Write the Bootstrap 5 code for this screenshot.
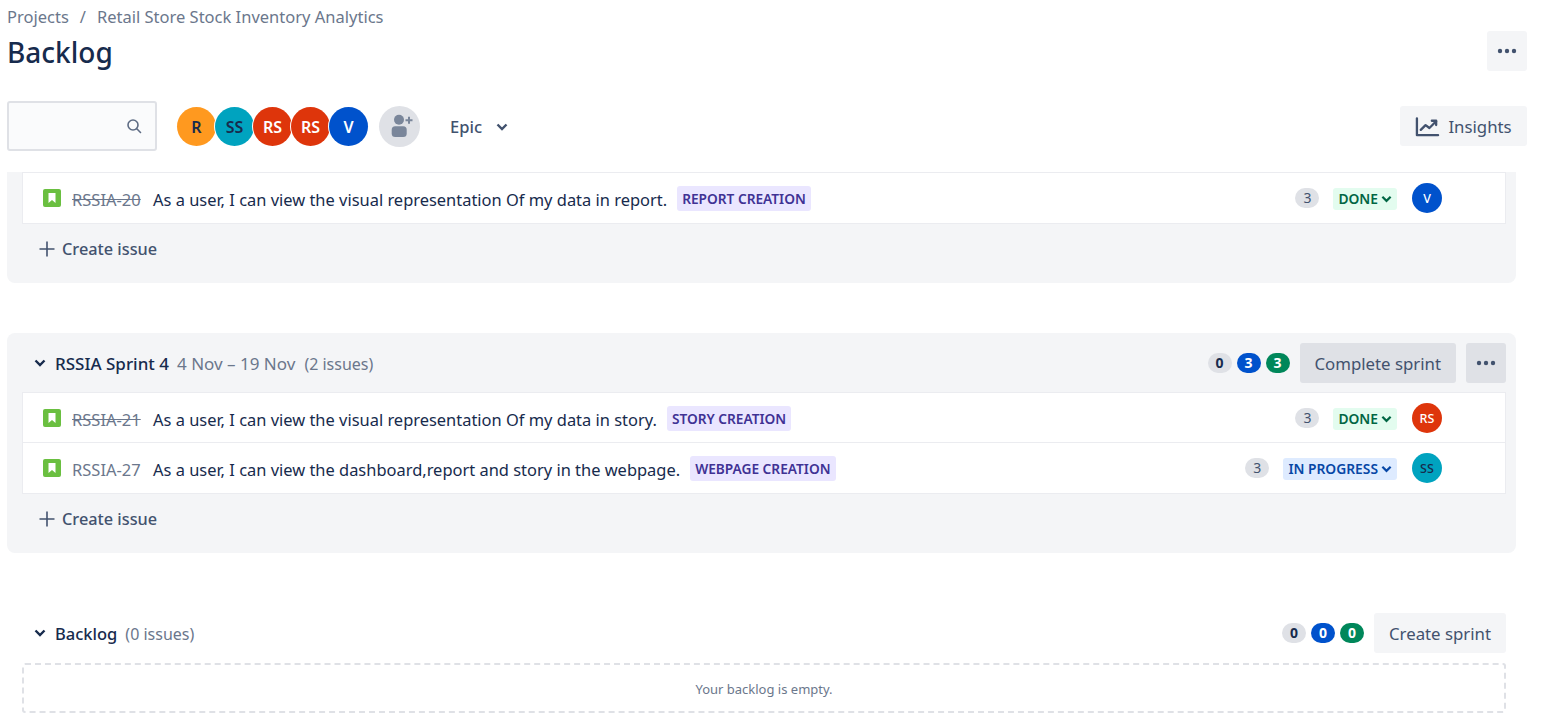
<!DOCTYPE html>
<html lang="en">
<head>
<meta charset="utf-8">
<title>Backlog</title>
<link href="https://cdn.jsdelivr.net/npm/bootstrap@5.3.0/dist/css/bootstrap.min.css" rel="stylesheet">
<style>
html,body{height:726px;overflow:hidden;background:#fff}
body{font-family:"Noto Sans","Open Sans",sans-serif;font-size:16.5px;color:#172b4d;line-height:20px}
.page-wrap{padding:0 18px 0 7px;width:1545px}
.crumbs{height:33px;color:#6b778c;gap:11px}
.page-title{height:37px;margin:0;font-size:28px;font-weight:500;line-height:39px;color:#172b4d}
.more-top{width:40px;height:40px;margin-top:-2px}
.head-row{height:68px}
.toolbar{height:70px;padding-bottom:20px}
.searchbox{width:150px;height:50px;background:#fafbfc;border:2px solid #dfe1e6;border-radius:3px;padding-right:13px}
.avatars{margin-left:20px}
.ava{width:39px;height:39px;border-radius:50%;display:flex;align-items:center;justify-content:center;font-weight:600;font-size:16px;border:0;flex:none;padding-top:1px}
.avatars .ava{margin-right:-1px;box-shadow:0 0 0 1px #fff}
.c-o{background:#ff991f;color:#172b4d}.c-t{background:#00a3bf;color:#172b4d}.c-r{background:#de350b;color:#fff}.c-b{background:#0052cc;color:#fff}
.add-ava{background:#dfe1e6;margin-left:12px;height:41px;width:41px;padding:0}
.epic{margin-left:30px;font-weight:500;color:#42526e;gap:14px;padding-top:1px}
.jbtn{background:#f4f5f7;color:#42526e;border:0;border-radius:3px;font-size:16.8px;height:40px;display:inline-flex;align-items:center;justify-content:center;padding:1px 15px 0;line-height:20px}
.jbtn.dark{background:#dfe1e6}
.jbtn.square{width:40px;padding:0}
.btn-gap{margin-left:10px}
.insights{width:127px;gap:8px;padding:1px 0 0}
.scroller{height:555px;overflow:hidden}
.sprint{background:#f4f5f7;border-radius:8px;width:1509px;padding:0 10px 0 15px}
.sprint-first{height:111px;border-radius:0 0 8px 8px;margin-top:1px}
.sprint-second{height:220px;margin-top:50px}
.sprint-head{height:59px;padding-top:1px}
.chev{margin-left:12px;margin-right:9px;flex:none}
.sp-name{font-weight:500;color:#172b4d;margin-right:8px;padding-top:2px}
.sp-long{font-size:17px}
.sp-meta{color:#6b778c;margin-right:9px;padding-top:2px;font-size:16px}
.sp-date{font-size:17px}
.issues{background:#fff;border:1px solid #ebecf0}
.issue{height:50px;padding:1px 63px 0 20px;border-bottom:1px solid #ebecf0}
.issue:last-child{border-bottom:0;padding-top:0}
.key{color:#6b778c;margin:0 10px 0 11px;min-width:71px;padding-top:3px}
.key.done{text-decoration:line-through}
.summary{color:#172b4d;padding-top:3px;font-size:16.45px}
.epic-tag{background:#eae6ff;color:#403294;font-size:13.7px;font-weight:600;border-radius:3px;padding:0 5px;height:25px;line-height:25px;margin-left:10px}
.points{background:#dfe1e6;color:#42526e;border-radius:10px;min-width:24px;height:20px;font-size:14px;text-align:center;line-height:20px;margin-right:14px}
.status{height:22px;font-size:13.8px;font-weight:600;border-radius:3px;padding:0 5px;gap:3px;line-height:22px;margin-top:2px}
.st-done{background:#e3fcef;color:#006644}
.st-prog{background:#deebff;color:#0747a6}
.issue .ava{width:30px;height:30px;font-size:12.5px;font-weight:500;margin-left:15px}
.create{height:50px;color:#42526e;font-weight:500;padding-left:17px;gap:7px;font-size:16.3px}
.cnt{min-width:24px;height:20px;border-radius:10px;text-align:center;font-size:14px;font-weight:700;line-height:20px;margin-right:5px;padding:0 5px}
.cnt.g{background:#dfe1e6;color:#172b4d}.cnt.b{background:#0052cc;color:#fff}.cnt.v{background:#00875a;color:#fff;margin-right:0}
.backlog{width:1484px;margin-left:15px;margin-top:60px}
.backlog-head{height:50px;padding-bottom:10px}
.empty{height:50px;border:2px dashed #dfe1e6;border-radius:3px;color:#6b778c;font-size:13px;padding-top:2px}
</style>
</head>
<body>
<div class="page-wrap">
  <nav class="crumbs d-flex align-items-center"><span>Projects</span><span>/</span><span>Retail Store Stock Inventory Analytics</span></nav>
  <div class="head-row d-flex justify-content-between align-items-start">
    <h1 class="page-title">Backlog</h1>
    <button class="jbtn square more-top" aria-label="More"><svg width="24" height="24" viewBox="0 0 24 24" fill="#42526e"><circle cx="5" cy="12" r="2.2"/><circle cx="12" cy="12" r="2.2"/><circle cx="19" cy="12" r="2.2"/></svg></button>
  </div>
  <div class="toolbar d-flex align-items-center">
    <div class="searchbox d-flex align-items-center justify-content-end"><svg width="16" height="16" viewBox="0 0 16 16" fill="none" stroke="#5e6c84" stroke-width="1.6"><circle cx="7" cy="7" r="5"/><path d="M10.8 10.8 14.5 14.5" stroke-linecap="round"/></svg></div>
    <div class="avatars d-flex">
      <span class="ava c-o">R</span><span class="ava c-t">SS</span><span class="ava c-r">RS</span><span class="ava c-r">RS</span><span class="ava c-b">V</span>
    </div>
    <span class="ava add-ava"><svg width="26" height="26" viewBox="0 0 26 26"><circle cx="12" cy="6.7" r="5" fill="#7a869a"/><rect x="4.7" y="13.3" width="15" height="10.7" rx="3.5" fill="#7a869a"/><path d="M22 3.8v7M18.500 7.300h7" stroke="#7a869a" stroke-width="2"/></svg></span>
    <div class="epic d-flex align-items-center"><span>Epic</span><svg width="12" height="8" viewBox="0 0 12 8" fill="none" stroke="#42526e" stroke-width="2.4"><path d="M1.5 1.5 6 6l4.500-4.500"/></svg></div>
    <button class="jbtn insights ms-auto"><svg width="25" height="24" viewBox="0 0 26 24" fill="none" stroke="#42526e" stroke-width="2.4" stroke-linecap="round" stroke-linejoin="round"><path d="M2 3v17.500h22"/><path d="M6 15l5-5 4 3 7-7"/><path d="M17.500 5.500H22V10"/></svg><span>Insights</span></button>
  </div>
  <div class="scroller">
    <section class="sprint sprint-first">
      <div class="issues">
        <div class="issue d-flex align-items-center">
          <svg width="18" height="18" viewBox="0 0 18 18"><rect width="18" height="18" rx="2" fill="#6abf40"/><path d="M5.500 4h7v10L9 11l-3.500 3z" fill="#fff"/></svg>
          <span class="key done">RSSIA-20</span><span class="summary">As a user, I can view the visual representation Of my data in report.</span><span class="epic-tag">REPORT CREATION</span>
          <span class="points ms-auto">3</span><span class="status st-done d-flex align-items-center">DONE<svg width="11" height="8" viewBox="0 0 12 8" fill="none" stroke="currentColor" stroke-width="2.4"><path d="M1.500 1.500 6 6l4.500-4.500"/></svg></span><span class="ava c-b">V</span>
        </div>
      </div>
      <div class="create d-flex align-items-center"><svg width="16" height="16" viewBox="0 0 16 16" stroke="#42526e" stroke-width="1.6"><path d="M8 .5v15M.5 8h15"/></svg>Create issue</div>
    </section>
    <section class="sprint sprint-second">
      <div class="sprint-head d-flex align-items-center">
        <svg class="chev" width="12" height="8" viewBox="0 0 12 8" fill="none" stroke="#172b4d" stroke-width="2.4"><path d="M1.500 1.500 6 6l4.500-4.500"/></svg>
        <span class="sp-name sp-long">RSSIA Sprint 4</span><span class="sp-meta sp-date">4 Nov – 19 Nov</span><span class="sp-meta">(2 issues)</span>
        <span class="cnt g ms-auto">0</span><span class="cnt b">3</span><span class="cnt v">3</span>
        <button class="jbtn dark btn-gap">Complete sprint</button><button class="jbtn dark square btn-gap" aria-label="More"><svg width="24" height="24" viewBox="0 0 24 24" fill="#42526e"><circle cx="5" cy="12" r="2.2"/><circle cx="12" cy="12" r="2.2"/><circle cx="19" cy="12" r="2.2"/></svg></button>
      </div>
      <div class="issues">
        <div class="issue d-flex align-items-center">
          <svg width="18" height="18" viewBox="0 0 18 18"><rect width="18" height="18" rx="2" fill="#6abf40"/><path d="M5.500 4h7v10L9 11l-3.500 3z" fill="#fff"/></svg>
          <span class="key done">RSSIA-21</span><span class="summary">As a user, I can view the visual representation Of my data in story.</span><span class="epic-tag">STORY CREATION</span>
          <span class="points ms-auto">3</span><span class="status st-done d-flex align-items-center">DONE<svg width="11" height="8" viewBox="0 0 12 8" fill="none" stroke="currentColor" stroke-width="2.4"><path d="M1.500 1.500 6 6l4.500-4.500"/></svg></span><span class="ava c-r">RS</span>
        </div>
        <div class="issue d-flex align-items-center">
          <svg width="18" height="18" viewBox="0 0 18 18"><rect width="18" height="18" rx="2" fill="#6abf40"/><path d="M5.500 4h7v10L9 11l-3.500 3z" fill="#fff"/></svg>
          <span class="key">RSSIA-27</span><span class="summary">As a user, I can view the dashboard,report and story in the webpage.</span><span class="epic-tag">WEBPAGE CREATION</span>
          <span class="points ms-auto">3</span><span class="status st-prog d-flex align-items-center">IN PROGRESS<svg width="11" height="8" viewBox="0 0 12 8" fill="none" stroke="currentColor" stroke-width="2.4"><path d="M1.500 1.500 6 6l4.500-4.500"/></svg></span><span class="ava c-t">SS</span>
        </div>
      </div>
      <div class="create d-flex align-items-center"><svg width="16" height="16" viewBox="0 0 16 16" stroke="#42526e" stroke-width="1.6"><path d="M8 .5v15M.5 8h15"/></svg>Create issue</div>
    </section>
    <section class="backlog">
      <div class="backlog-head d-flex align-items-center">
        <svg class="chev" width="12" height="8" viewBox="0 0 12 8" fill="none" stroke="#172b4d" stroke-width="2.4"><path d="M1.500 1.500 6 6l4.500-4.500"/></svg>
        <span class="sp-name">Backlog</span><span class="sp-meta">(0 issues)</span>
        <span class="cnt g ms-auto">0</span><span class="cnt b">0</span><span class="cnt v">0</span>
        <button class="jbtn btn-gap">Create sprint</button>
      </div>
      <div class="empty d-flex align-items-center justify-content-center">Your backlog is empty.</div>
    </section>
  </div>
</div>
</body>
</html>
